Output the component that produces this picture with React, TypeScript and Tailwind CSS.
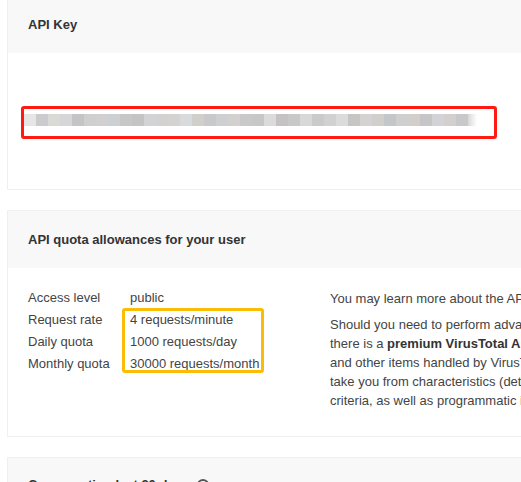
import React from "react";

// blurred key mosaic, left to right
const KEY_BLOCKS = [
  "#e6e6e4", "#cbcbcd", "#d9d9d6", "#d6d6d8", "#c4c4c6", "#cfcfcf", "#d1cfcf", "#cdd0d3",
  "#c8c7c5", "#c4c4c4", "#d3d3d5", "#d2d2d2", "#d4d3d1", "#d9dadc", "#d1cfcc", "#c9c8ca",
  "#cdcfd2", "#d2d1d0", "#cac9c9", "#c7c7c8", "#dbdbdb", "#c4c2c3", "#c9c8c8", "#d8d8d8",
  "#cacaca", "#d2d1d1", "#dbdbdb", "#c6c5c3", "#d3d3d4", "#d1cfcc", "#c4c7c9", "#cfcfcf",
  "#d1cecc", "#c6c6c8", "#d3d3d7", "#d2cfce", "#c8c8cb",
];

const QUOTAS = [
  { label: "Access level", value: "public" },
  { label: "Request rate", value: "4 requests/minute" },
  { label: "Daily quota", value: "1000 requests/day" },
  { label: "Monthly quota", value: "30000 requests/month" },
];

function Card({
  title,
  children,
  className = "",
  titleClass = "",
}: {
  title: React.ReactNode;
  children: React.ReactNode;
  className?: string;
  titleClass?: string;
}) {
  return (
    <div className={`border border-[#f0f0f0] ${className}`}>
      <div className={`h-[57px] bg-[#f8f8f8] px-5 flex items-center text-[13px] font-bold text-[#333] ${titleClass}`}>{title}</div>
      {children}
    </div>
  );
}

export default function App() {
  return (
    <div className="w-[521px] h-[482px] overflow-hidden bg-white font-['Liberation_Sans',Arial,sans-serif] text-[13px] text-[#444]">
      <div className="w-[900px] ml-[7px] flex flex-col gap-5">
        <Card title="API Key" className="-mt-[5px]">
          <div className="h-[136px] flex items-center pl-[13px] pt-[3px]">
            <div className="w-[476px] h-[33px] border-[3px] border-[#ff1a12] rounded-[3px] flex items-center pb-[7px]">
              <div className="flex mt-[2px]">
                {KEY_BLOCKS.map((c, i) => (
                  <div key={i} className="w-[12px] h-[12px]" style={{ backgroundColor: c }} />
                ))}
                <div className="w-[9px] h-[12px] bg-gradient-to-r from-[#d8d8d8] to-white" />
              </div>
            </div>
          </div>
        </Card>

        <Card title="API quota allowances for your user">
          <div className="h-[168px] flex pl-5 pt-[19px]">
            <div className="relative w-[302px] shrink-0">
              <table className="leading-[22px]">
                <tbody>
                  {QUOTAS.map((q) => (
                    <tr key={q.label}>
                      <td className="w-[102px] p-0">{q.label}</td>
                      <td className="p-0">{q.value}</td>
                    </tr>
                  ))}
                </tbody>
              </table>
              <div className="absolute left-[94px] top-[21px] w-[142px] h-[65px] border-[3px] border-[#fbbc05] rounded-[3px]" />
            </div>
            <div className="leading-[19px] whitespace-nowrap pt-[2px]">
              <p className="mb-[7px]">You may learn more about the API in our documentation.</p>
              <p>
                Should you need to perform advanced threat hunting and malware discovery,
                <br />
                there is a <b className="text-[#333]">premium VirusTotal API</b> that exposes advanced search,
                <br />
                and other items handled by VirusTotal. Premium endpoints will
                <br />
                take you from characteristics (detections, behaviour) to files matching your
                <br />
                criteria, as well as programmatic interaction with our feeds.
              </p>
            </div>
          </div>
        </Card>

        <Card
          titleClass="pb-[4px]"
          title={
            <span>
              Consumption last 30 days{" "}
              <span className="inline-block w-[12px] h-[12px] rounded-full border-2 border-[#555] align-middle ml-1" />
            </span>
          }
        >
          <div className="h-[100px]" />
        </Card>
      </div>
    </div>
  );
}
